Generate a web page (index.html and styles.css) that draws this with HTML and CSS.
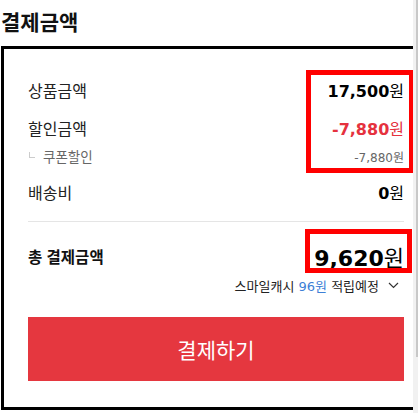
FILE: index.html
```html
<!DOCTYPE html>
<html lang="ko">
<head>
    <meta charset="UTF-8">
    <meta name="viewport" content="width=device-width, initial-scale=1.0">
    <title>결제금액</title>
    <link rel="stylesheet" href="styles.css">
</head>
<body>
    <div class="page">
        <h2 class="title">결제금액</h2>
        <div class="summary">
            <div class="row">
                <span class="label">상품금액</span>
                <span class="price"><b>17,500</b>원</span>
            </div>
            <div class="row discount">
                <span class="label">할인금액</span>
                <span class="price"><b>-7,880</b>원</span>
            </div>
            <div class="row sub">
                <span class="label"><i class="corner"></i>쿠폰할인</span>
                <span class="price">-7,880원</span>
            </div>
            <div class="row shipping">
                <span class="label">배송비</span>
                <span class="price"><b>0</b>원</span>
            </div>
            <div class="total">
                <div class="row total-row">
                    <span class="label">총 결제금액</span>
                    <span class="price"><b>9,620</b>원</span>
                </div>
                <div class="cash">
                    <span>스마일캐시 <span class="point">96원</span> 적립예정</span>
                    <svg class="chevron" width="11" height="7" viewBox="0 0 11 7">
                        <path d="M1 1 L5.5 5.5 L10 1" fill="none" stroke="#333" stroke-width="1.2"/>
                    </svg>
                </div>
            </div>
            <button class="pay">결제하기</button>
            <span class="mark mark-price"></span>
            <span class="mark mark-total"></span>
        </div>
    </div>
    <div class="scrollbar"><div class="thumb"></div></div>
</body>
</html>
```

FILE: styles.css
```css
html, body {
    overflow: hidden;
}
body {
    margin: 0;
    font-family: "DejaVu Sans", "Noto Sans CJK KR", sans-serif;
    color: #000;
    background: #fff;
}
.page {
    width: 431px;
    padding-left: 1px;
}
.title {
    margin: 0;
    padding-top: 6px;
    height: 40px;
    line-height: 30px;
    font-size: 21px;
    font-weight: bold;
    font-family: "Noto Sans CJK KR", sans-serif;
    color: #111;
}
.summary {
    position: relative;
    width: 376px;
    border: 3px solid #000;
    padding: 29px 24px 26px;
}
.row {
    display: flex;
    justify-content: space-between;
    align-items: center;
    height: 24px;
    font-size: 16px;
    color: #222;
}
.label {
    font-family: "Noto Sans CJK KR", sans-serif;
    display: flex;
    align-items: center;
}
.price {
    font-size: 16px;
    color: #000;
}
.price b {
    font-weight: bold;
}
.discount {
    margin-top: 14px;
}
.discount .price {
    color: #e5323e;
}
.sub {
    margin-top: 7px;
    height: 18px;
    font-size: 13.5px;
}
.sub .label {
    color: #666;
}
.sub .price {
    font-size: 12px;
    color: #666;
}
.corner {
    display: inline-block;
    width: 5px;
    height: 5px;
    margin: 0 8px 2px 1px;
    border-left: 1px solid #ccc;
    border-bottom: 1px solid #ccc;
}
.shipping {
    margin-top: 15px;
}
.total {
    margin-top: 17px;
    border-top: 1px solid #e5e5e5;
    padding-top: 18px;
}
.total-row {
    height: 32px;
}
.total-row .label {
    font-size: 15.5px;
    font-weight: bold;
    color: #111;
}
.total-row .price {
    font-size: 22px;
}
.cash {
    display: flex;
    justify-content: flex-end;
    align-items: center;
    height: 20px;
    margin-top: 3px;
    padding-right: 5px;
    font-size: 13px;
    color: #222;
}
.point {
    color: #3d80d6;
}
.chevron {
    margin-left: 9px;
}
.pay {
    display: block;
    width: 100%;
    height: 64px;
    margin-top: 22px;
    border: none;
    background-color: #e5373f;
    color: #fff;
    font-family: "Noto Sans CJK KR", sans-serif;
    font-size: 21px;
}
.mark {
    position: absolute;
    box-sizing: border-box;
    border: 5px solid #ff0000;
}
.mark-price {
    left: 302px;
    top: 21px;
    width: 108px;
    height: 103px;
}
.mark-total {
    left: 301px;
    top: 180px;
    width: 107px;
    height: 44px;
}
.scrollbar {
    position: fixed;
    top: 0;
    right: 0;
    width: 5px;
    height: 100%;
    background: #f1f1f1;
}
.thumb {
    position: absolute;
    top: 0;
    right: 0;
    width: 2px;
    height: 357px;
    background: #c8c8c8;
}
```
